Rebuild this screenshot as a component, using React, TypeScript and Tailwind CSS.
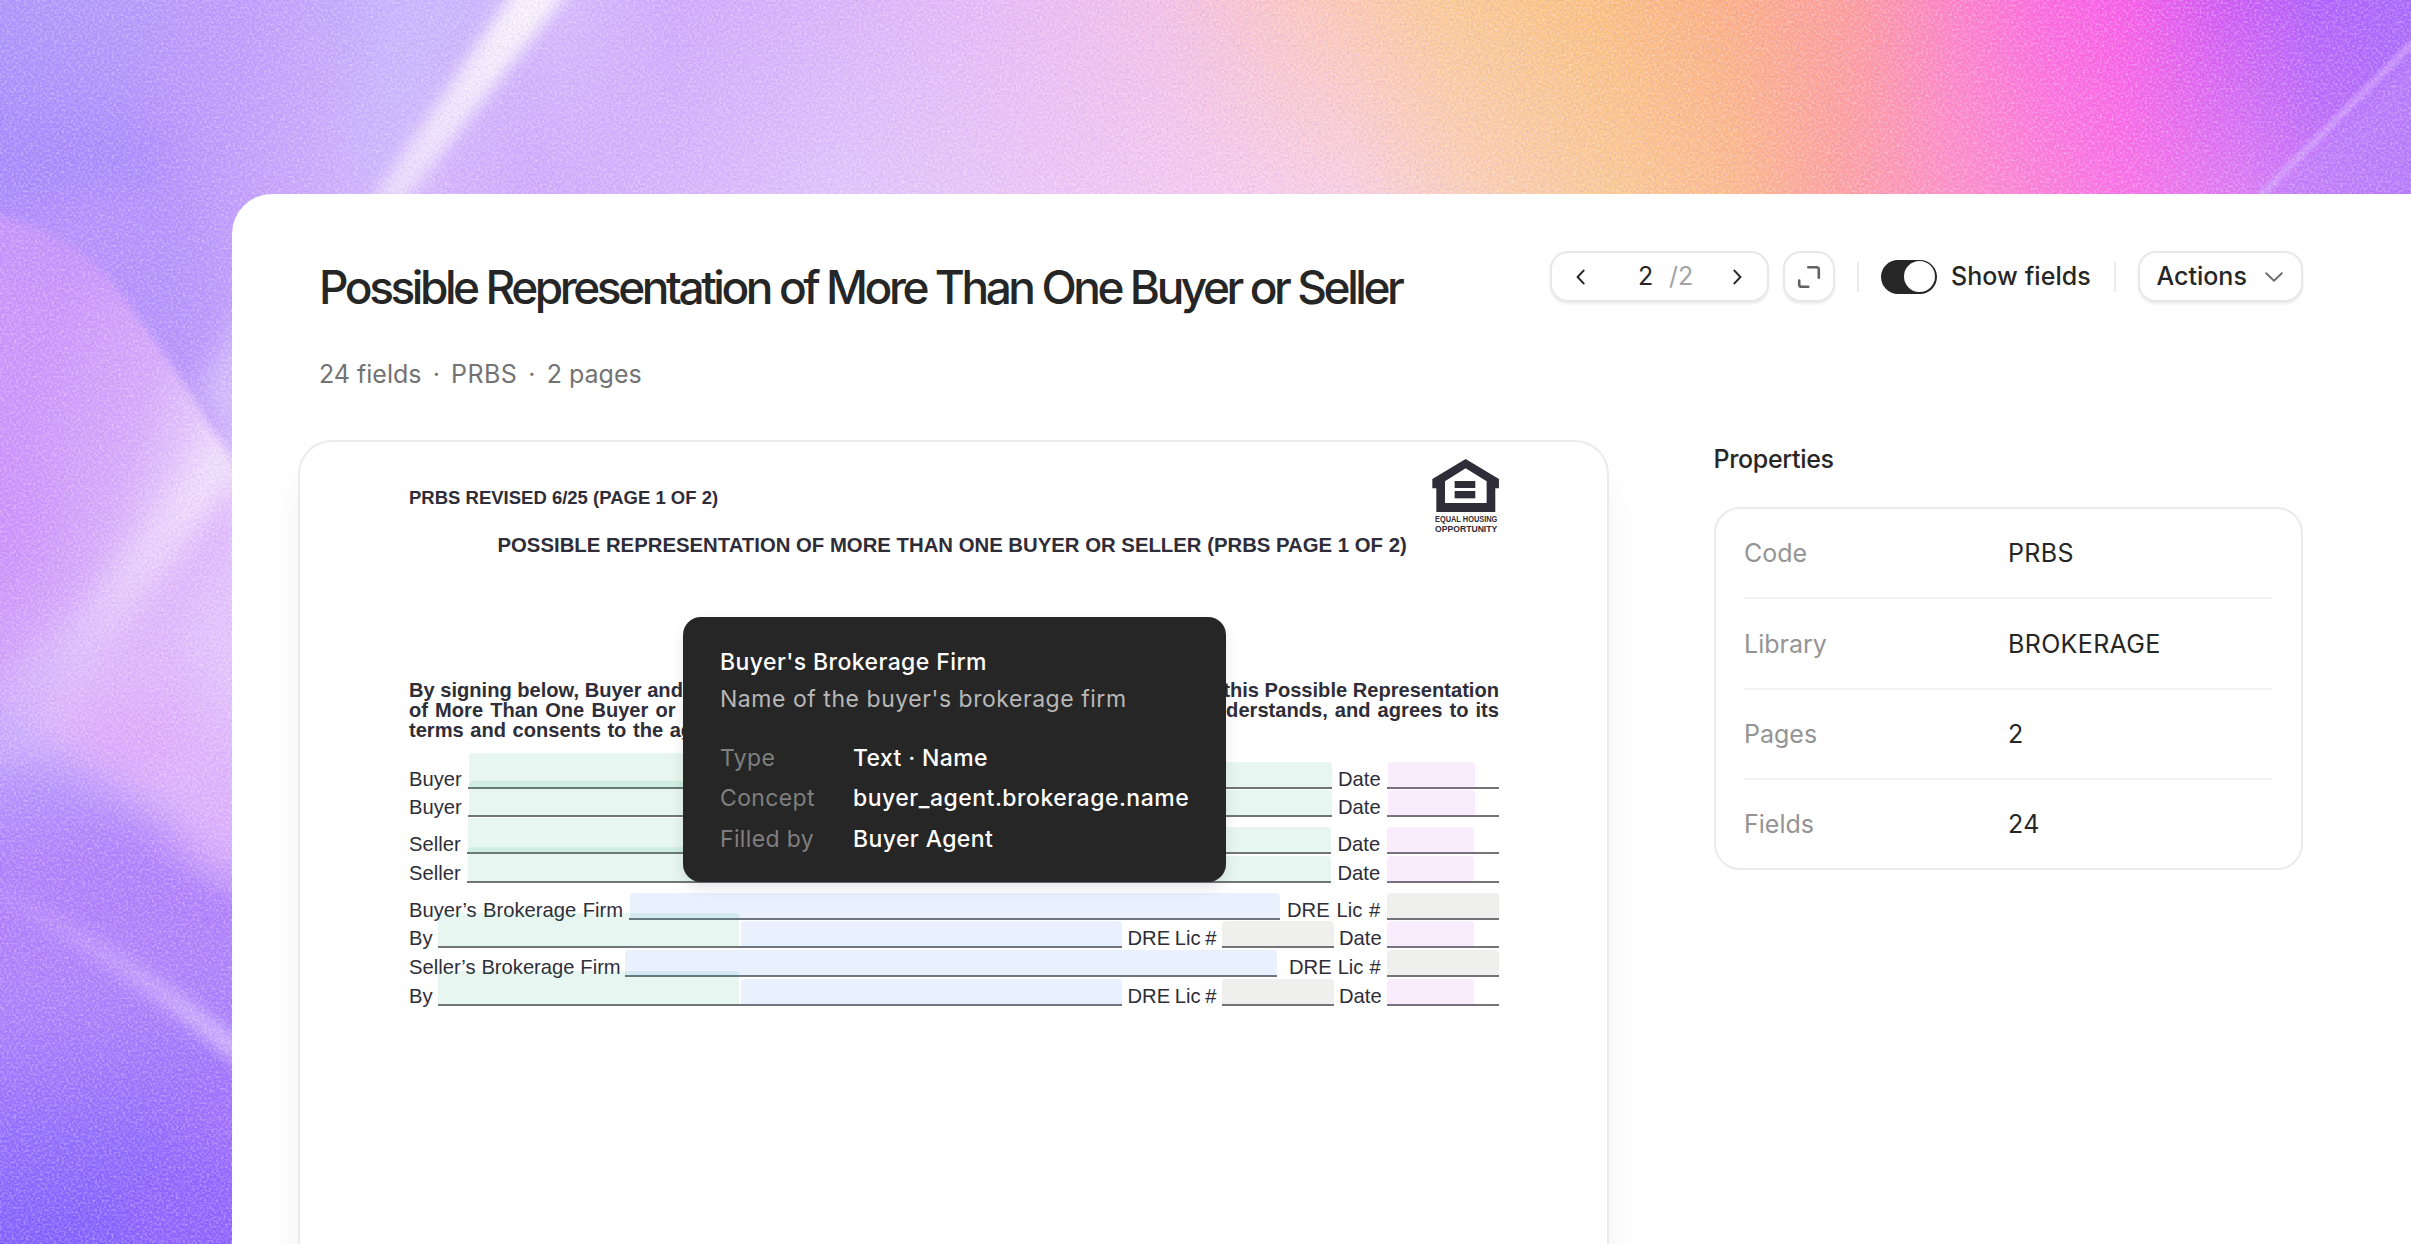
import React from "react";

function Backdrop() {
  return (
    <svg className="absolute inset-0 h-full w-full" viewBox="0 0 2411 1244" preserveAspectRatio="none" aria-hidden="true">
      <defs>
        <linearGradient id="topTone" gradientUnits="userSpaceOnUse" x1="0" y1="0" x2="2411" y2="0">
          <stop offset="0" stopColor="#a996fb" />
          <stop offset=".1" stopColor="#be9cfb" />
          <stop offset=".17" stopColor="#c6b4fd" />
          <stop offset=".235" stopColor="#d4bafc" />
          <stop offset=".28" stopColor="#d0aafb" />
          <stop offset=".34" stopColor="#d9b3fa" />
          <stop offset=".42" stopColor="#e9bcf5" />
          <stop offset=".48" stopColor="#f4c1e6" />
          <stop offset=".54" stopColor="#fdc9bc" />
          <stop offset=".6" stopColor="#fdcb90" />
          <stop offset=".66" stopColor="#fcc27c" />
          <stop offset=".71" stopColor="#fdb27e" />
          <stop offset=".77" stopColor="#fe9b9a" />
          <stop offset=".81" stopColor="#fe80c4" />
          <stop offset=".85" stopColor="#fd66de" />
          <stop offset=".88" stopColor="#fa5ae4" />
          <stop offset=".92" stopColor="#d257f2" />
          <stop offset=".96" stopColor="#b05ffb" />
          <stop offset="1" stopColor="#a868fc" />
        </linearGradient>
        <linearGradient id="lowTone" gradientUnits="userSpaceOnUse" x1="0" y1="0" x2="2411" y2="0">
          <stop offset="0" stopColor="#a88afb" />
          <stop offset=".06" stopColor="#b18ffb" />
          <stop offset=".11" stopColor="#c5a2fb" />
          <stop offset=".17" stopColor="#d6b8fb" />
          <stop offset=".22" stopColor="#d0a9fb" />
          <stop offset=".3" stopColor="#d9b9fb" />
          <stop offset=".35" stopColor="#dfc6fa" />
          <stop offset=".42" stopColor="#ebc6f5" />
          <stop offset=".5" stopColor="#f5cbf0" />
          <stop offset=".56" stopColor="#fad0e0" />
          <stop offset=".61" stopColor="#fcd0b4" />
          <stop offset=".67" stopColor="#fcca90" />
          <stop offset=".72" stopColor="#fdbb88" />
          <stop offset=".76" stopColor="#fea29a" />
          <stop offset=".81" stopColor="#ff8fc6" />
          <stop offset=".88" stopColor="#fa70e4" />
          <stop offset=".93" stopColor="#dd7af2" />
          <stop offset="1" stopColor="#ac6cfb" />
        </linearGradient>
        <linearGradient id="fade" x1="0" y1="0" x2="0" y2="1">
          <stop offset="0" stopColor="#000" />
          <stop offset="1" stopColor="#fff" />
        </linearGradient>
        <mask id="fadeMask">
          <rect width="2411" height="200" fill="url(#fade)" />
          <rect y="200" width="2411" height="1044" fill="#fff" />
        </mask>
        <linearGradient id="streak" gradientUnits="userSpaceOnUse" x1="540" y1="0" x2="385" y2="194">
          <stop offset="0" stopColor="#faf6fb" />
          <stop offset="1" stopColor="#ebdcfc" />
        </linearGradient>
        <linearGradient id="violet" gradientUnits="userSpaceOnUse" x1="0" y1="760" x2="40" y2="1244">
          <stop offset="0" stopColor="#b39bfd" />
          <stop offset=".22" stopColor="#ae7dfb" />
          <stop offset=".5" stopColor="#ac80fb" />
          <stop offset=".72" stopColor="#9570fd" />
          <stop offset="1" stopColor="#7d5dfe" />
        </linearGradient>
        <linearGradient id="petal" gradientUnits="userSpaceOnUse" x1="30" y1="380" x2="228" y2="450">
          <stop offset="0" stopColor="#cb94fa" />
          <stop offset=".55" stopColor="#d6a9fa" />
          <stop offset="1" stopColor="#f0defb" />
        </linearGradient>
        <linearGradient id="shaft" gradientUnits="userSpaceOnUse" x1="225" y1="450" x2="0" y2="740">
          <stop offset="0" stopColor="#f3e6fc" stopOpacity=".9" />
          <stop offset=".5" stopColor="#ead4fc" stopOpacity=".6" />
          <stop offset="1" stopColor="#d0bffd" stopOpacity=".3" />
        </linearGradient>
        <linearGradient id="ray" gradientUnits="userSpaceOnUse" x1="0" y1="870" x2="232" y2="1060">
          <stop offset="0" stopColor="#c79bfb" stopOpacity=".2" />
          <stop offset="1" stopColor="#d9c0fe" stopOpacity=".95" />
        </linearGradient>
        <filter id="b2" x="-50%" y="-50%" width="200%" height="200%"><feGaussianBlur stdDeviation="2.5" /></filter>
        <filter id="b4" x="-50%" y="-50%" width="200%" height="200%"><feGaussianBlur stdDeviation="4" /></filter>
        <filter id="b8" x="-50%" y="-50%" width="200%" height="200%"><feGaussianBlur stdDeviation="8" /></filter>
        <filter id="b14" x="-50%" y="-50%" width="200%" height="200%"><feGaussianBlur stdDeviation="14" /></filter>
        <filter id="b24" x="-80%" y="-80%" width="260%" height="260%"><feGaussianBlur stdDeviation="24" /></filter>
        <filter id="grain" x="0" y="0" width="100%" height="100%">
          <feTurbulence type="fractalNoise" baseFrequency=".42" numOctaves="2" seed="7" />
          <feColorMatrix values="0 0 0 0 1  0 0 0 0 1  0 0 0 0 1  2.6 0 0 0 -1.1" />
        </filter>
        <filter id="grainDark" x="0" y="0" width="100%" height="100%">
          <feTurbulence type="fractalNoise" baseFrequency=".42" numOctaves="2" seed="21" />
          <feColorMatrix values="0 0 0 0 .45  0 0 0 0 .2  0 0 0 0 .9  2.6 0 0 0 -1.1" />
        </filter>
      </defs>
      <rect width="2411" height="1244" fill="url(#topTone)" />
      <rect width="2411" height="1244" fill="url(#lowTone)" mask="url(#fadeMask)" />
      <ellipse cx="60" cy="160" rx="110" ry="50" fill="#a385fb" opacity=".5" filter="url(#b24)" />
      <path d="M450 -20L380 200L340 200L390 -20Z" fill="#c5bffe" opacity=".4" filter="url(#b24)" />
      <path d="M514 -10H570L403 204H369Z" fill="url(#streak)" filter="url(#b8)" />
      <path d="M90 190H200L220 400L190 390Q130 270 60 225Z" fill="#b094fb" opacity=".6" filter="url(#b24)" />
      <path d="M250 300V480L200 390Z" fill="#d9c6fb" opacity=".8" filter="url(#b14)" />

      <path d="M-30 212Q70 225 115 285T195 400L240 475V900L-30 780Z" fill="url(#petal)" filter="url(#b4)" />
      <path d="M-20 205H140V280H-20Z" fill="#bb92fb" opacity=".45" filter="url(#b24)" />
      <ellipse cx="0" cy="520" rx="50" ry="70" fill="#cc8efa" opacity=".7" filter="url(#b24)" />
      <path d="M240 470L60 690L-20 770V800L260 900Z" fill="#dfb7fb" filter="url(#b14)" />
      <path d="M245 520V760L190 640Z" fill="#e6cdfc" opacity=".9" filter="url(#b24)" />
      <ellipse cx="130" cy="740" rx="60" ry="40" fill="#dfa4fa" opacity=".7" filter="url(#b24)" />
      <path d="M222 436L238 462L70 680L-10 745V690L90 600Z" fill="url(#shaft)" filter="url(#b14)" />
      <path d="M-40 745L50 752Q150 805 270 900V1300H-40Z" fill="url(#violet)" filter="url(#b24)" />
      <ellipse cx="220" cy="820" rx="40" ry="50" fill="#dcaefb" opacity=".7" filter="url(#b24)" />
      <ellipse cx="0" cy="735" rx="40" ry="20" fill="#c0b0fe" opacity=".5" filter="url(#b14)" />
      <path d="M-10 880Q130 948 242 1042V1068Q120 966 -10 898Z" fill="url(#ray)" filter="url(#b8)" />
      <ellipse cx="225" cy="1120" rx="50" ry="50" fill="#ae6ffb" opacity=".5" filter="url(#b24)" />
      <ellipse cx="190" cy="1220" rx="70" ry="50" fill="#9a63fe" opacity=".6" filter="url(#b24)" />

      <path d="M2430 0V40L2258 200H2430Z" fill="#bd83fb" opacity=".6" filter="url(#b8)" />
      <path d="M2420 36L2256 200" stroke="#d6a6fd" strokeWidth="6" opacity=".85" filter="url(#b2)" />
      <rect width="2411" height="1244" filter="url(#grain)" opacity=".34" />
      <rect width="2411" height="1244" filter="url(#grainDark)" opacity=".2" />
    </svg>
  );
}

function EqualHousingLogo() {
  return (
    <svg width="67.3" height="76" viewBox="66 57 202 228" className="shrink-0 overflow-visible" fill="#2e2d38">
      <path
        fillRule="evenodd"
        d="M167 57L267 117V145H256V216H79V145H67V117ZM167 85L105 124V189H230V124Z"
      />
      <rect x="134" y="123" width="62" height="21" />
      <rect x="134" y="153" width="62" height="22" />
      <text x="75" y="247" fontFamily="Liberation Sans" fontWeight="700" fontSize="27" textLength="187" lengthAdjust="spacingAndGlyphs">EQUAL HOUSING</text>
      <text x="75" y="277" fontFamily="Liberation Sans" fontWeight="700" fontSize="27" textLength="187" lengthAdjust="spacingAndGlyphs">OPPORTUNITY</text>
    </svg>
  );
}

type Cell = { label?: string; w: string; fills?: string[] };

const GREEN = "bg-[#10a56e]/10";
const BLUE = "bg-[#2f74f6]/10";
const PINK = "bg-[#b948f0]/10";
const GRAY = "bg-[#66665a]/10";

const SIGNATURE_AND_NAME = [
  `left-[1px] w-[431px] h-[35px] ${GREEN}`,
  `left-[432px] w-[432px] h-[26px] ${GREEN}`,
];

const rows: { mt: string; cells: Cell[] }[] = [
  {
    mt: "mt-[25px]",
    cells: [
      { label: "Buyer", w: "w-[59px]" },
      { w: "w-[864px]", fills: SIGNATURE_AND_NAME },
      { label: "Date", w: "w-[55px] pl-[6px]" },
      { w: "w-[112px]", fills: [`left-[1px] w-[87px] h-[26px] ${PINK}`] },
    ],
  },
  {
    mt: "mt-[4px]",
    cells: [
      { label: "Buyer", w: "w-[59px]" },
      { w: "w-[864px]", fills: SIGNATURE_AND_NAME },
      { label: "Date", w: "w-[55px] pl-[6px]" },
      { w: "w-[112px]", fills: [`left-[1px] w-[87px] h-[26px] ${PINK}`] },
    ],
  },
  {
    mt: "mt-[13px]",
    cells: [
      { label: "Seller", w: "w-[58px]" },
      { w: "w-[864px]", fills: SIGNATURE_AND_NAME },
      { label: "Date", w: "w-[56px] pl-[6.5px]" },
      { w: "w-[112px]", fills: [`left-0 w-[87px] h-[26px] ${PINK}`] },
    ],
  },
  {
    mt: "mt-[5px]",
    cells: [
      { label: "Seller", w: "w-[58px]" },
      { w: "w-[864px]", fills: SIGNATURE_AND_NAME },
      { label: "Date", w: "w-[56px] pl-[6.5px]" },
      { w: "w-[112px]", fills: [`left-0 w-[87px] h-[26px] ${PINK}`] },
    ],
  },
  {
    mt: "mt-[13px]",
    cells: [
      { label: "Buyer’s Brokerage Firm", w: "w-[220px] [word-spacing:0.8px]" },
      { w: "w-[651px]", fills: [`left-[1px] w-[650px] h-[26px] ${BLUE}`] },
      { label: "DRE Lic #", w: "w-[107px] pl-[7px] [word-spacing:1.2px]" },
      { w: "w-[112px]", fills: [`left-0 w-[112px] h-[26px] ${GRAY}`] },
    ],
  },
  {
    mt: "mt-[4px]",
    cells: [
      { label: "By", w: "w-[29px]" },
      { w: "w-[684px]", fills: [`left-0 w-[301px] h-[34px] ${GREEN}`, `left-[303px] w-[381px] h-[26px] ${BLUE}`] },
      { label: "DRE Lic #", w: "w-[100px] pl-[5.5px] [word-spacing:-1px]" },
      { w: "w-[112px]", fills: [`left-0 w-[112px] h-[26px] ${GRAY}`] },
      { label: "Date", w: "w-[53px] pl-[5px]" },
      { w: "w-[112px]", fills: [`left-0 w-[87px] h-[26px] ${PINK}`] },
    ],
  },
  {
    mt: "mt-[5px]",
    cells: [
      { label: "Seller’s Brokerage Firm", w: "w-[216px] [word-spacing:0.2px]" },
      { w: "w-[652px]", fills: [`left-0 w-[652px] h-[26px] ${BLUE}`] },
      { label: "DRE Lic #", w: "w-[110px] pl-[12px] [word-spacing:0.4px]" },
      { w: "w-[112px]", fills: [`left-0 w-[112px] h-[26px] ${GRAY}`] },
    ],
  },
  {
    mt: "mt-[5px]",
    cells: [
      { label: "By", w: "w-[29px]" },
      { w: "w-[684px]", fills: [`left-0 w-[301px] h-[34px] ${GREEN}`, `left-[303px] w-[381px] h-[26px] ${BLUE}`] },
      { label: "DRE Lic #", w: "w-[100px] pl-[5.5px] [word-spacing:-1px]" },
      { w: "w-[112px]", fills: [`left-0 w-[112px] h-[26px] ${GRAY}`] },
      { label: "Date", w: "w-[53px] pl-[5px]" },
      { w: "w-[112px]", fills: [`left-0 w-[87px] h-[26px] ${PINK}`] },
    ],
  },
];

function FormRows() {
  return (
    <div className="text-[20.2px] leading-[20px]">
      {rows.map((row, i) => (
        <div key={i} className={`flex h-[24px] items-end ${row.mt}`}>
          {row.cells.map((cell, j) =>
            cell.label ? (
              <span key={j} className={`shrink-0 whitespace-nowrap ${cell.w}`}>{cell.label}</span>
            ) : (
              <span key={j} className={`relative h-[24px] shrink-0 border-b-2 border-[#74747a] ${cell.w}`}>
                {cell.fills?.map((f) => (
                  <span key={f} className={`absolute -bottom-px rounded-t-[4px] ${f}`} />
                ))}
              </span>
            ),
          )}
        </div>
      ))}
    </div>
  );
}

const details = [
  ["Type", "Text · Name", "tracking-[0.35px]"],
  ["Concept", "buyer_agent.brokerage.name", "tracking-[0.5px]"],
  ["Filled by", "Buyer Agent", "tracking-[0.4px]"],
];

function FieldTooltip() {
  return (
    <div className="absolute left-[383px] top-[174.5px] h-[265.5px] w-[543px] rounded-[18px] bg-[#262626] pl-[37px] pt-[27.6px] font-[Inter,sans-serif] text-[23px] leading-[37px] text-white shadow-[0_6px_14px_rgba(0,0,0,0.1)]">
      <div className="font-medium tracking-[0.41px]">Buyer&apos;s Brokerage Firm</div>
      <div className="tracking-[0.54px] text-[#b8b8b8]">Name of the buyer&apos;s brokerage firm</div>
      <div className="mt-[19.6px] leading-[40.7px]">
        {details.map(([k, v, t]) => (
          <div key={k} className="flex">
            <span className="w-[133px] tracking-[0.35px] text-[#7f7f7f]">{k}</span>
            <span className={`font-medium ${t}`}>{v}</span>
          </div>
        ))}
      </div>
    </div>
  );
}

function DocumentPage() {
  return (
    <div className="relative h-[804px] w-[1311px] shrink-0 rounded-t-[34px] border-2 border-b-0 border-[#ebebeb] bg-white pl-[109px] font-['Liberation_Sans',sans-serif] text-[#2e2d38] shadow-[0_30px_36px_rgba(0,0,0,0.05)]">
      <div className="w-[1090px]">
        <div className="flex h-[91.3px] items-start justify-between pt-[17px] font-bold">
          <div className="mt-[26.6px] text-[18.5px] leading-[24px]">PRBS REVISED 6/25 (PAGE 1 OF 2)</div>
          <EqualHousingLogo />
        </div>
        <div className="whitespace-nowrap pl-[88.5px] text-[20.33px] font-bold leading-[24px]">
          POSSIBLE REPRESENTATION OF MORE THAN ONE BUYER OR SELLER (PRBS PAGE 1 OF 2)
        </div>
        <div className="mt-[122.3px] text-[20.1px] font-bold leading-[20.15px]">
          <div className="flex justify-between"><span>By signing below, Buyer and Seller</span><span>this Possible Representation</span></div>
          <div className="flex justify-between [word-spacing:1.5px]"><span>of More Than One Buyer or Seller</span><span>understands, and agrees to its</span></div>
          <div className="[word-spacing:1px]">terms and consents to the agency</div>
        </div>
        <FormRows />
      </div>
      <FieldTooltip />
    </div>
  );
}

const properties = [
  ["Code", "PRBS"],
  ["Library", "BROKERAGE"],
  ["Pages", "2"],
  ["Fields", "24"],
];

function Properties() {
  return (
    <aside className="w-[589px] shrink-0 text-[25px]">
      <h2 className="mt-[3px] font-medium leading-[32px] tracking-[-0.34px]">Properties</h2>
      <div className="mt-[32px] h-[363px] rounded-[26px] border-2 border-[#ebebeb] px-[28.5px]">
        {properties.map(([k, v], i) => (
          <div key={k} className={`flex items-center pt-[2px] ${i < 3 ? "h-[90.3px] border-b-2 border-[#f2f2f2]" : "h-[88px]"}`}>
            <span className="w-[264px] text-[#949494]">{k}</span>
            <span className="tracking-[0.35px]">{v}</span>
          </div>
        ))}
      </div>
    </aside>
  );
}

function Toolbar() {
  const box = "flex h-[51px] shrink-0 items-center rounded-[18px] border-2 border-[#e8e8e8] bg-white shadow-[0_2px_3px_rgba(0,0,0,0.08)]";
  return (
    <div className="mt-[57px] flex h-[51px] w-[753px] shrink-0 items-center text-[25px]">
      <div className={`${box} w-[219px]`}>
        <svg className="ml-[24.5px] shrink-0" width="9" height="16" viewBox="0 0 9 16" fill="none" stroke="#262626" strokeWidth="2" strokeLinecap="round" strokeLinejoin="round"><path d="M7.6 1.6L1.6 8l6 6.4" /></svg>
        <span className="ml-[53px] w-[31px]">2</span>
        <span className="w-[23px] text-[#a3a3a3]">/2</span>
        <svg className="ml-[41px] shrink-0" width="9" height="16" viewBox="0 0 9 16" fill="none" stroke="#262626" strokeWidth="2" strokeLinecap="round" strokeLinejoin="round"><path d="M1.4 1.6l6 6.4l-6 6.4" /></svg>
      </div>
      <div className={`${box} ml-[14.5px] w-[52px] justify-center`}>
        <svg width="24" height="24" viewBox="0 0 24 24" fill="none" stroke="#626262" strokeWidth="2.6" strokeLinecap="round"><path d="M11.3 2.2H19.4Q21.8 2.2 21.8 4.6V12.7M2.2 15.6V19.4Q2.2 21.8 4.6 21.8H11.3" /></svg>
      </div>
      <div className="ml-[21.5px] h-[30px] w-[2px] bg-[#ebebeb]" />
      <div className="ml-[22px] flex h-[34px] w-[56px] shrink-0 items-center justify-end rounded-full bg-[#262626] pr-[1.5px]">
        <div className="h-[31px] w-[31px] rounded-full bg-white" />
      </div>
      <span className="ml-[14.5px] w-[140.5px] whitespace-nowrap font-medium tracking-[0.08px]">Show fields</span>
      <div className="ml-[22px] h-[30px] w-[2px] bg-[#ebebeb]" />
      <div className={`${box} ml-[22px] w-[165px] pl-[17px]`}>
        <span className="w-[108px] font-medium">Actions</span>
        <svg width="18" height="10" viewBox="0 0 18 10" fill="none" stroke="#6e6e6e" strokeWidth="1.9" strokeLinecap="round" strokeLinejoin="round"><path d="M1.2 1.2L9 8.8l7.8-7.6" /></svg>
      </div>
    </div>
  );
}

export default function App() {
  return (
    <div className="relative h-[1244px] w-[2411px] overflow-hidden bg-[#c9a2fb] font-[Inter,sans-serif] text-[#262626] antialiased">
      <Backdrop />
      <main className="relative ml-[232px] mt-[194px] flex h-[1050px] flex-col rounded-tl-[40px] bg-white">
        <header className="flex h-[246px] shrink-0 justify-between pl-[87px] pr-[108.5px]">
          <div className="pt-[65px]">
            <h1 className="whitespace-nowrap text-[46px] font-medium leading-[56px] tracking-[-3.44px]">
              Possible Representation of More Than One Buyer or Seller
            </h1>
            <p className="mt-[43px] flex gap-[11.2px] text-[25px] leading-[32px] text-[#737373]">
              <span>24 fields</span><span>·</span><span className="tracking-[0.4px]">PRBS</span><span>·</span><span>2 pages</span>
            </p>
          </div>
          <Toolbar />
        </header>
        <div className="flex gap-[104.5px] pl-[66px]">
          <DocumentPage />
          <Properties />
        </div>
      </main>
    </div>
  );
}
